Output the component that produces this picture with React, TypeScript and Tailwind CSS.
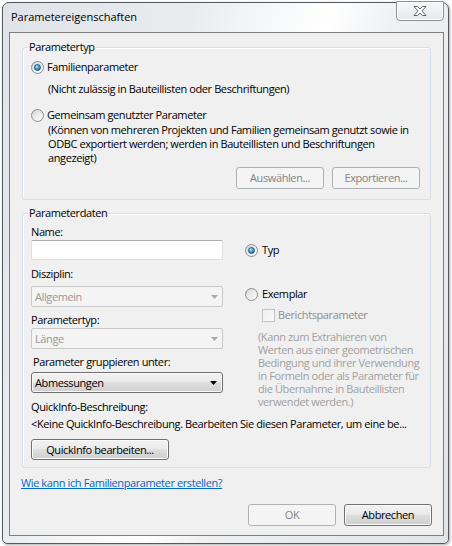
import React from "react";

function Radio({ checked }: { checked?: boolean }) {
  return (
    <span className="flex h-[13px] w-[13px] shrink-0 items-center justify-center rounded-full border border-[#8a8c8e] bg-[linear-gradient(135deg,#cfd1d3_0%,#eceded_50%,#ffffff_100%)]">
      {checked ? (
        <span className="h-[7px] w-[7px] rounded-full border border-[#1c5180] bg-[radial-gradient(circle_at_35%_30%,#b6ecff_0%,#3fa0dc_45%,#0d5a9a_100%)]" />
      ) : (
        <span className="h-[9px] w-[9px] rounded-full bg-[linear-gradient(135deg,#d9dbdd,#fbfbfb)]" />
      )}
    </span>
  );
}

function Arrow({ color }: { color: string }) {
  return (
    <svg width="7" height="4" viewBox="0 0 7 4">
      <path d="M0 0 H7 L3.5 4 Z" fill={color} />
    </svg>
  );
}

function DisabledSelect({ text }: { text: string }) {
  return (
    <div className="flex h-[21px] w-[192px] items-center justify-between rounded-[2px] border border-[#c9c9c9] bg-[#f4f4f4] pl-[3px] pr-[4px] text-[#979797]">
      <span>{text}</span>
      <Arrow color="#a9a9a9" />
    </div>
  );
}

function Button({ children, disabled, className }: { children: React.ReactNode; disabled?: boolean; className: string }) {
  return disabled ? (
    <div className={"flex items-center justify-center rounded-[3px] border border-[#adb2b5] bg-[#f4f4f4] text-[#838383] " + className}>
      {children}
    </div>
  ) : (
    <div className={"flex items-center justify-center rounded-[3px] border border-[#707070] bg-[linear-gradient(#f2f2f2_0%,#ebebeb_45%,#dddddd_52%,#cfcfcf_100%)] shadow-[inset_0_0_0_1px_#fbfbfb] text-black " + className}>
      {children}
    </div>
  );
}

function Group({ title, className, children }: { title: string; className: string; children: React.ReactNode }) {
  return (
    <div className={"relative ml-[12px] w-[409px] rounded-[3px] border border-[#d5dfe5] shadow-[inset_1px_1px_0_#ffffff] " + className}>
      <span className="absolute left-[5px] top-[-8px] bg-[#f0f0f0] px-[1px] leading-[14px]">{title}</span>
      {children}
    </div>
  );
}

const exemplarLines = [
  "(Kann zum Extrahieren von",
  "Werten aus einer geometrischen",
  "Bedingung und ihrer Verwendung",
  "in Formeln oder als Parameter für",
  "die Übernahme in Bauteillisten",
  "verwendet werden.)",
];

export default function App() {
  return (
    <div className="h-[546px] w-[452px] bg-white pl-[2px] pt-[2px] font-['Open_Sans',sans-serif] text-[11px] leading-[14px] tracking-[-0.4px] text-black">
      <div className="relative h-[542px] w-[447px] rounded-t-[7px] rounded-b-[5px] border border-[#555a60] bg-[linear-gradient(110deg,#dfe3e7_0%,#e9ecef_30%,#f8f9fa_44%,#ffffff_52%,#eef0f2_62%,#e2e5e8_100%)] pl-[6px] pt-[29px] shadow-[1px_1px_3px_rgba(0,0,0,0.35)]">
        <div className="absolute left-[8px] top-[7px] text-[11px] leading-[14px] tracking-normal text-black">Parametereigenschaften</div>
        <div className="absolute right-[4px] top-[-2px] flex h-[20px] w-[48px] items-center justify-center rounded-b-[4px] border border-[#8e9296] bg-[linear-gradient(#f7f8f9,#e6e8ea)] shadow-[inset_0_0_0_1px_#ffffff]">
          <svg width="14" height="10" viewBox="0 0 14 10">
            <path d="M1 0.5 H4.5 L7 3 L9.5 0.5 H13 L9 5 L13 9.5 H9.5 L7 7 L4.5 9.5 H1 L5 5 Z" fill="#ffffff" stroke="#5f666e" strokeWidth="1" strokeLinejoin="round" />
          </svg>
        </div>

        <div className="h-[504px] w-[435px] border border-[#7d7d7d] bg-[#f0f0f0] pt-[14px]">
          <Group title="Parametertyp" className="h-[153px]">
            <div className="pl-[8px] pt-[12px]">
              <div className="flex h-[14px] items-center gap-[3px]">
                <Radio checked />
                <span>Familienparameter</span>
              </div>
              <div className="ml-[17px] mt-[8px]">(Nicht zulässig in Bauteillisten oder Beschriftungen)</div>
              <div className="mt-[12px] flex h-[14px] items-center gap-[3px]">
                <Radio />
                <span>Gemeinsam genutzter Parameter</span>
              </div>
              <div className="ml-[17px] mt-[1px] whitespace-nowrap">
                <div className="h-[14px]">(Können von mehreren Projekten und Familien gemeinsam genutzt sowie in</div>
                <div className="h-[14px]">ODBC exportiert werden; werden in Bauteillisten und Beschriftungen</div>
                <div className="h-[14px]">angezeigt)</div>
              </div>
              <div className="mt-[2px] flex justify-end gap-[8px] pr-[10px]">
                <Button disabled className="h-[22px] w-[88px]">Auswählen...</Button>
                <Button disabled className="h-[22px] w-[88px]">Exportieren...</Button>
              </div>
            </div>
          </Group>

          <Group title="Parameterdaten" className="mt-[13px] h-[255px]">
            <div className="pl-[8px] pt-[11px]">
              <div className="flex gap-[22px]">
                <div className="flex w-[192px] flex-col">
                  <div>Name:</div>
                  <div className="mt-[1px] h-[20px] w-[192px] rounded-[2px] border border-[#dbdfe6] border-t-[#abadb3] bg-white" />
                  <div className="mt-[7px]">Disziplin:</div>
                  <div className="mt-[5px]"><DisabledSelect text="Allgemein" /></div>
                  <div className="mt-[6px]">Parametertyp:</div>
                  <div className="mt-[1px]"><DisabledSelect text="Länge" /></div>
                  <div className="ml-[2px] mt-[6px]">Parameter gruppieren unter:</div>
                  <div className="mt-[3px] flex h-[21px] w-[192px] items-center justify-between rounded-[3px] border border-[#707070] bg-[linear-gradient(#f2f2f2_0%,#ebebeb_45%,#dddddd_52%,#cfcfcf_100%)] pl-[3px] pr-[5px] shadow-[inset_0_0_0_1px_#fbfbfb]">
                    <span>Abmessungen</span>
                    <Arrow color="#000000" />
                  </div>
                  <div className="mt-[7px]">QuickInfo-Beschreibung:</div>
                </div>
                <div className="flex flex-col">
                  <div className="mt-[18px] flex h-[14px] items-center gap-[4px]">
                    <Radio checked />
                    <span>Typ</span>
                  </div>
                  <div className="mt-[30px] flex h-[14px] items-center gap-[4px]">
                    <Radio />
                    <span>Exemplar</span>
                  </div>
                  <div className="ml-[17px] mt-[7px] flex h-[14px] items-center gap-[3px]">
                    <span className="h-[13px] w-[13px] border border-[#c2c5c8] bg-[linear-gradient(135deg,#eceeef,#fbfbfb)]" />
                    <span className="text-[#8d8d8d]">Berichtsparameter</span>
                  </div>
                  <div className="ml-[13px] mt-[8px] whitespace-nowrap text-[#a0a0a0]">
                    {exemplarLines.map((l) => (
                      <div key={l} className="flex h-[13px] items-center leading-[13px]">
                        {l}
                      </div>
                    ))}
                  </div>
                </div>
              </div>
              <div className="mt-[3px] whitespace-nowrap">&lt;Keine QuickInfo-Beschreibung. Bearbeiten Sie diesen Parameter, um eine be...</div>
              <Button className="mt-[8px] h-[21px] w-[138px]">QuickInfo bearbeiten...</Button>
            </div>
          </Group>

          <div className="ml-[11px] mt-[8px]">
            <span className="text-[#0066cc] underline">Wie kann ich Familienparameter erstellen?</span>
          </div>

          <div className="mr-[11px] mt-[14px] flex justify-end gap-[8px]">
            <Button disabled className="h-[22px] w-[88px]">OK</Button>
            <Button className="h-[22px] w-[88px]">Abbrechen</Button>
          </div>
        </div>
      </div>
    </div>
  );
}
